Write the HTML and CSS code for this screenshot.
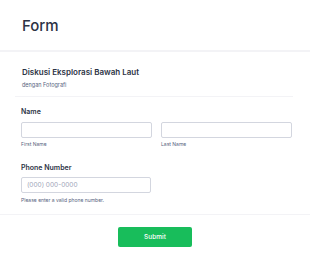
FILE: index.html
```html
<!DOCTYPE html>
<html lang="id">
<head>
    <meta charset="UTF-8">
    <meta name="viewport" content="width=device-width, initial-scale=1.0">
    <title>Form</title>
    <link rel="stylesheet" href="styles.css">
</head>
<body>
    <div class="page-header">
        <h1>Form</h1>
    </div>

    <form class="form-card" onsubmit="return false;">
        <div class="form-heading">
            <h2>Diskusi Eksplorasi Bawah Laut</h2>
            <p>dengan Fotografi</p>
        </div>

        <!-- Nama lengkap -->
        <div class="field">
            <label class="field-label">Name</label>
            <div class="name-row">
                <div class="name-col">
                    <input type="text" class="input-field" />
                    <span class="sublabel">First Name</span>
                </div>
                <div class="name-col">
                    <input type="text" class="input-field" />
                    <span class="sublabel">Last Name</span>
                </div>
            </div>
        </div>

        <!-- Nomor telepon -->
        <div class="field">
            <label class="field-label">Phone Number</label>
            <input type="tel" class="input-field phone" placeholder="(000) 000-0000" />
            <span class="sublabel">Please enter a valid phone number.</span>
        </div>

        <div class="form-footer">
            <button type="submit" class="btn-submit">Submit</button>
        </div>
    </form>
</body>
</html>
```

FILE: styles.css
```css
/* Estilos generales */
body {
    font-family: Inter, "Noto Sans", sans-serif;
    margin: 0;
    padding: 0;
    background-color: #fff;
    color: #2c3345;
}

.page-header {
    height: 50px;
    border-bottom: 2px solid #f3f3f6;
    padding: 0 22px;
    display: flex;
    align-items: center;
}

.page-header h1 {
    margin: 0;
    font-size: 15px;
    font-weight: 500;
}

.form-card {
    padding: 0 17px 0 15px;
}

.form-heading {
    padding: 14px 7px 7.5px;
    border-bottom: 1px solid #f3f3f6;
}

.form-heading h2 {
    margin: 0;
    font-size: 8px;
    font-weight: 600;
    line-height: 12px;
}

.form-heading p {
    margin: 3.5px 0 0;
    font-size: 5.5px;
    line-height: 7px;
    color: #57647e;
}

.field {
    padding: 10px 1px 4.5px 6px;
}

.field-label {
    display: block;
    font-size: 7px;
    font-weight: 600;
    line-height: 10px;
    margin-bottom: 4.5px;
}

.name-row {
    display: flex;
    gap: 9px;
}

.name-col {
    flex: 1;
}

.input-field {
    display: block;
    width: 100%;
    height: 16px;
    padding: 0 5px;
    border: 1px solid #d3d6df;
    border-radius: 2px;
    box-sizing: border-box;
    font-family: inherit;
    font-size: 6.5px;
    color: #2c3345;
}

.input-field::placeholder {
    color: #a0a5b8;
}

.input-field.phone {
    width: 130px;
}

.sublabel {
    display: block;
    font-size: 5px;
    line-height: 7px;
    color: #57647e;
    margin-top: 3.5px;
}

.form-footer {
    margin: 5.5px -17px 0 -15px;
    border-top: 1px solid #f3f3f6;
    padding-top: 12px;
    display: flex;
    justify-content: center;
}

.btn-submit {
    background-color: #18bd5b;
    color: #fff;
    width: 74px;
    height: 20px;
    border: none;
    border-radius: 2px;
    font-family: inherit;
    font-size: 6.5px;
    font-weight: 500;
    cursor: pointer;
}
```
